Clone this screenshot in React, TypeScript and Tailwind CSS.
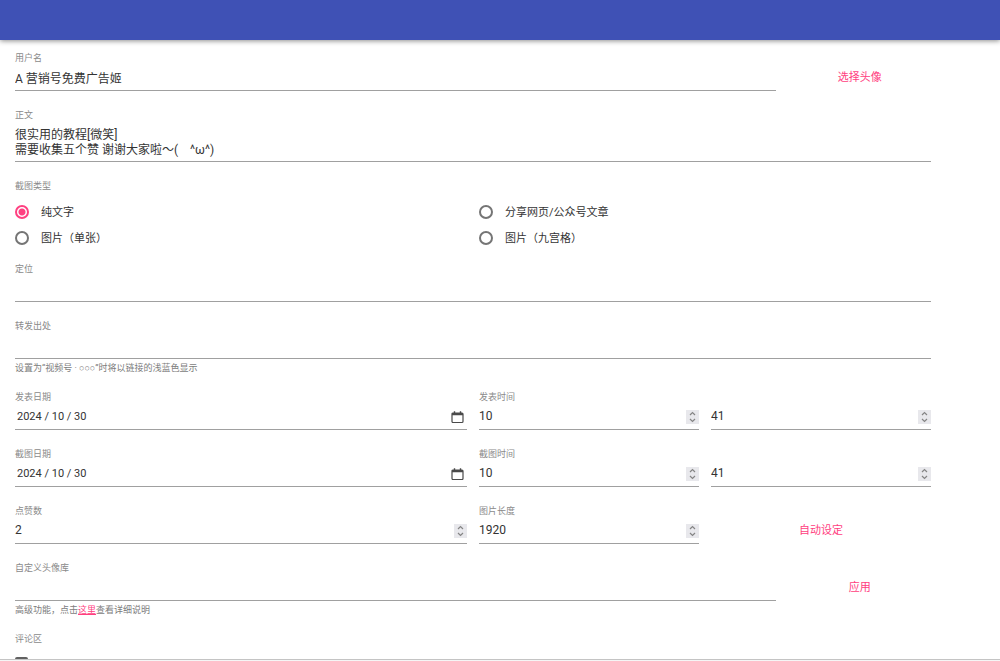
import { useId, useState } from 'react';

const fieldLabel = 'block text-[9px] leading-4 text-[#8a8a8a]';
const fieldInput =
  'block h-6 w-full border-0 bg-transparent p-0 pb-0.5 text-xs text-[#333333] outline-none';
const fieldLine = 'border-b border-[#a0a0a0]';

const shotTypes = ['纯文字', '分享网页/公众号文章', '图片（单张）', '图片（九宫格）'];

function TextField({
  label,
  defaultValue = '',
  className = '',
  children,
}: {
  label: string;
  defaultValue?: string;
  className?: string;
  children?: React.ReactNode;
}) {
  const id = useId();

  return (
    <div className={className}>
      <label htmlFor={id} className={fieldLabel}>
        {label}
      </label>
      <div className={fieldLine}>
        <input id={id} type="text" defaultValue={defaultValue} className={fieldInput} />
      </div>
      {children && (
        <p className="mt-[5px] text-[9px] leading-[9px] text-[#7c7c7c]">{children}</p>
      )}
    </div>
  );
}

function DateField({ label, defaultValue }: { label: string; defaultValue: string }) {
  const id = useId();

  return (
    <div className="col-span-6">
      <label htmlFor={id} className={fieldLabel}>
        {label}
      </label>
      <div className={`flex items-center ${fieldLine}`}>
        <input
          id={id}
          type="text"
          defaultValue={defaultValue}
          className="block h-6 min-w-0 flex-1 bg-transparent pb-0.5 pl-0.5 text-[11px] text-[#333333] outline-none"
        />
        <button type="button" aria-label="选择日期" className="mr-[3px] text-[#4a4a4a]">
          <svg width="13" height="13" viewBox="0 0 13 13" className="block">
            <rect
              x="1"
              y="2"
              width="11"
              height="9.500"
              rx="1"
              fill="none"
              stroke="currentColor"
              strokeWidth="1.200"
            />
            <path d="M1 2h11v2.200H1zM2.800 .2h1.400V2H2.800zM8.800 .2h1.400V2H8.800z" fill="currentColor" />
          </svg>
        </button>
      </div>
    </div>
  );
}

function NumberField({
  label,
  name,
  initial,
  className = '',
}: {
  label?: string;
  name: string;
  initial: number;
  className?: string;
}) {
  const id = useId();
  const [value, setValue] = useState(initial);

  return (
    <div className={className}>
      {label ? (
        <label htmlFor={id} className={fieldLabel}>
          {label}
        </label>
      ) : (
        <div className="h-4" />
      )}
      <div className={`flex items-center ${fieldLine}`}>
        <input
          id={id}
          type="number"
          aria-label={label ? undefined : name}
          value={value}
          onChange={(e) => setValue(Number(e.target.value))}
          className={`${fieldInput} min-w-0 flex-1 [appearance:textfield] [&::-webkit-inner-spin-button]:appearance-none`}
        />
        <div className="flex flex-col bg-[#e8e8ec] text-[#858585]">
          <button type="button" aria-label="增加" onClick={() => setValue(value + 1)}>
            <svg width="13" height="7" viewBox="0 0 13 7" className="block">
              <path d="M4 5 6.500 2.500 9 5" fill="none" stroke="currentColor" strokeWidth="1.200" />
            </svg>
          </button>
          <button type="button" aria-label="减少" onClick={() => setValue(value - 1)}>
            <svg width="13" height="7" viewBox="0 0 13 7" className="block">
              <path d="M4 2 6.500 4.500 9 2" fill="none" stroke="currentColor" strokeWidth="1.200" />
            </svg>
          </button>
        </div>
      </div>
    </div>
  );
}

function ActionButton({ children, className = '' }: { children: string; className?: string }) {
  return (
    <div className={`flex items-start justify-center pt-4 ${className}`}>
      <button type="button" className="h-6 px-3 text-[11px] text-[#ff4081]">
        {children}
      </button>
    </div>
  );
}

export default function App() {
  const [shotType, setShotType] = useState(shotTypes[0]);

  return (
    <div className="flex h-screen flex-col bg-white font-['Roboto','Liberation_Sans','Noto_Sans_CJK_SC',sans-serif] text-[#333333]">
      <header className="z-10 h-10 shrink-0 bg-[#3f51b5] shadow-[0_1px_5px_rgba(0,0,0,0.45)]" />

      <main className="min-h-0 flex-1 overflow-hidden border-b border-[#c4c4c4]">
        <form className="mr-[69px] ml-[15px] flex flex-col gap-4 pt-2.5">
          <div className="grid grid-cols-12 gap-x-3">
            <TextField label="用户名" defaultValue="A 营销号免费广告姬" className="col-span-10" />
            <ActionButton className="col-span-2">选择头像</ActionButton>
          </div>

          <div>
            <label htmlFor="content" className={fieldLabel}>
              正文
            </label>
            <textarea
              id="content"
              rows={2}
              defaultValue={'很实用的教程[微笑]\n需要收集五个赞 谢谢大家啦～(　^ω^)'}
              className={`block w-full resize-none overflow-hidden bg-transparent pt-[5px] pb-[3px] text-xs leading-[15px] outline-none ${fieldLine}`}
            />
          </div>

          <fieldset className="-mb-[6px]">
            <legend className={fieldLabel}>截图类型</legend>
            <div className="grid grid-cols-2 gap-x-3 pt-[5px]">
              {shotTypes.map((type) => (
                <label key={type} className="flex h-[26px] items-center text-[11px] leading-4">
                  <input
                    type="radio"
                    name="shot-type"
                    checked={shotType === type}
                    onChange={() => setShotType(type)}
                    className="mr-3 size-[14px] appearance-none rounded-full border-2 border-[#757575] checked:border-[#ff4081] checked:bg-[radial-gradient(circle,#ff4081_3px,transparent_4px)]"
                  />
                  <span className="pt-0.5">{type}</span>
                </label>
              ))}
            </div>
          </fieldset>

          <TextField label="定位" />
          <TextField label="转发出处">设置为“视频号 · ○○○”时将以链接的浅蓝色显示</TextField>

          <div className="grid grid-cols-12 gap-x-3">
            <DateField label="发表日期" defaultValue="2024 / 10 / 30" />
            <NumberField label="发表时间" name="发表小时" initial={10} className="col-span-3" />
            <NumberField name="发表分钟" initial={41} className="col-span-3" />
          </div>

          <div className="grid grid-cols-12 gap-x-3">
            <DateField label="截图日期" defaultValue="2024 / 10 / 30" />
            <NumberField label="截图时间" name="截图小时" initial={10} className="col-span-3" />
            <NumberField name="截图分钟" initial={41} className="col-span-3" />
          </div>

          <div className="grid grid-cols-12 gap-x-3">
            <NumberField label="点赞数" name="点赞数" initial={2} className="col-span-6" />
            <NumberField label="图片长度" name="图片长度" initial={1920} className="col-span-3" />
            <ActionButton className="col-span-3">自动设定</ActionButton>
          </div>

          <div className="grid grid-cols-12 gap-x-3">
            <TextField label="自定义头像库" className="col-span-10">
              高级功能，点击
              <a href="#help" className="text-[#ff4081] underline">
                这里
              </a>
              查看详细说明
            </TextField>
            <ActionButton className="col-span-2">应用</ActionButton>
          </div>

          <div>
            <label htmlFor="comments" className={fieldLabel}>
              评论区
            </label>
            <input
              id="comments"
              type="checkbox"
              className="mt-2.5 block size-[13px] appearance-none rounded-xs border-2 border-[#616161]"
            />
          </div>
        </form>
      </main>
      <div className="h-px shrink-0 bg-[#f5f5f5]" />
    </div>
  );
}
